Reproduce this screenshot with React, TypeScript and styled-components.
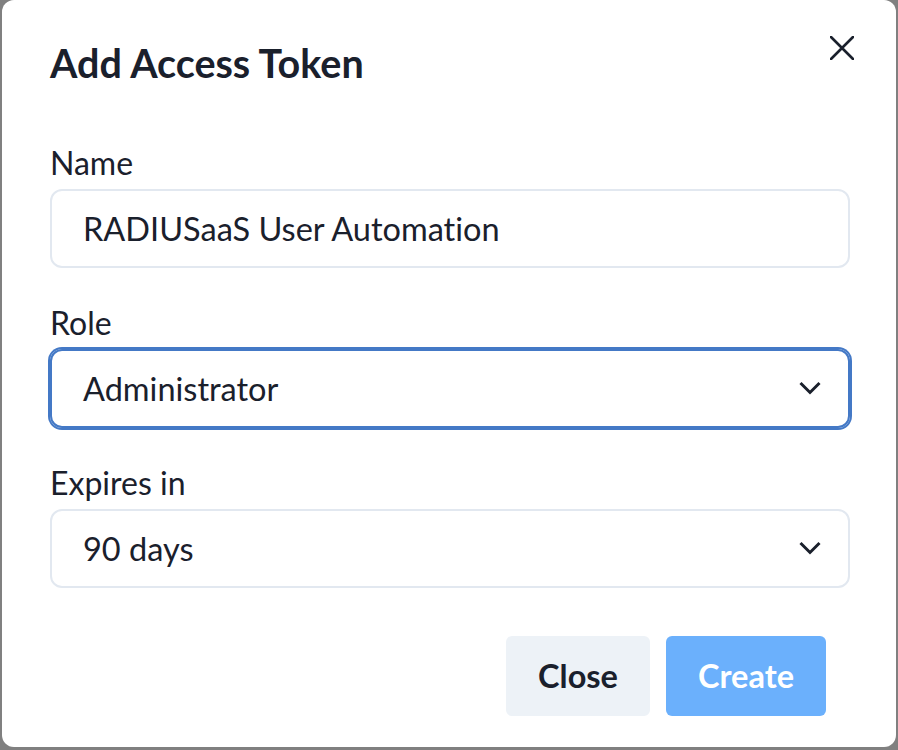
import React from "react";
import styled, { createGlobalStyle } from "styled-components";

const Global = createGlobalStyle`
  html, body { margin: 0; padding: 0; }
  body {
    background: #808080;
    font-family: Lato, "Open Sans", sans-serif;
    font-variant-ligatures: no-common-ligatures;
    color: #1a202c;
    width: 898px;
    height: 750px;
    overflow: hidden;
  }
`;

const Backdrop = styled.div`
  width: 898px;
  height: 750px;
  display: flex;
  align-items: flex-start;
  padding-left: 2px;
  box-sizing: border-box;
`;

const Dialog = styled.section`
  width: 894px;
  height: 747px;
  background: #ffffff;
  border-radius: 12px;
  display: flex;
  flex-direction: column;
  box-sizing: border-box;
`;

const Header = styled.header`
  display: flex;
  justify-content: space-between;
  align-items: flex-start;
  padding: 36px 42px 0 48px;
`;

const Title = styled.h2`
  margin: 3px 0 0;
  font-size: 39.5px;
  line-height: 1.2;
  font-weight: 700;
  color: #1a202c;
`;

const CloseIcon = styled.button`
  width: 24px;
  height: 24px;
  padding: 0;
  border: none;
  background: transparent;
  display: flex;
  color: #1a202c;
`;

const Body = styled.div`
  display: flex;
  flex-direction: column;
  gap: 36.5px;
  padding: 58px 46px 0 48px;
`;

const Field = styled.div`
  display: flex;
  flex-direction: column;
  gap: 6px;
`;

const Label = styled.label`
  font-size: 32px;
  line-height: 1.2;
  color: #1a202c;
`;

const Control = styled.div<{ $focused?: boolean }>`
  height: 79px;
  box-sizing: border-box;
  border: 2px solid ${(p) => (p.$focused ? "#4479c6" : "#e2e8f0")};
  box-shadow: ${(p) => (p.$focused ? "0 0 0 2px #4479c6" : "none")};
  border-radius: 12px;
  display: flex;
  align-items: center;
  justify-content: space-between;
  padding: 0 27px 0 31px;
`;

const Value = styled.span`
  font-size: 32.5px;
  line-height: 1.2;
  color: #1a202c;
`;

const Footer = styled.footer`
  display: flex;
  justify-content: flex-end;
  gap: 16px;
  padding: 48px 70px 0 0;
`;

const Button = styled.button<{ $primary?: boolean }>`
  height: 80px;
  padding: 0 32px;
  border: none;
  border-radius: 6px;
  font-family: Lato, "Open Sans", sans-serif;
  font-size: 32.5px;
  font-weight: 700;
  background: ${(p) => (p.$primary ? "#6bb0fc" : "#edf2f7")};
  color: ${(p) => (p.$primary ? "#ffffff" : "#1a202c")};
`;

const Chevron = () => (
  <svg width="22" height="14" viewBox="0 0 22 14" fill="none">
    <polyline points="1.5,2 11,11.5 20.5,2" stroke="#1a202c" strokeWidth="3" strokeLinejoin="miter" />
  </svg>
);

export default function App() {
  return (
    <>
      <Global />
      <Backdrop>
        <Dialog>
          <Header>
            <Title>Add Access Token</Title>
            <CloseIcon aria-label="Close">
              <svg width="24" height="24" viewBox="0 0 24 24" fill="none">
                <path d="M1 1 L23 23 M23 1 L1 23" stroke="#1a202c" strokeWidth="2.6" strokeLinecap="round" />
              </svg>
            </CloseIcon>
          </Header>
          <Body>
            <Field>
              <Label>Name</Label>
              <Control>
                <Value>RADIUSaaS User Automation</Value>
              </Control>
            </Field>
            <Field>
              <Label>Role</Label>
              <Control $focused>
                <Value>Administrator</Value>
                <Chevron />
              </Control>
            </Field>
            <Field>
              <Label>Expires in</Label>
              <Control>
                <Value>90 days</Value>
                <Chevron />
              </Control>
            </Field>
          </Body>
          <Footer>
            <Button>Close</Button>
            <Button $primary>Create</Button>
          </Footer>
        </Dialog>
      </Backdrop>
    </>
  );
}
